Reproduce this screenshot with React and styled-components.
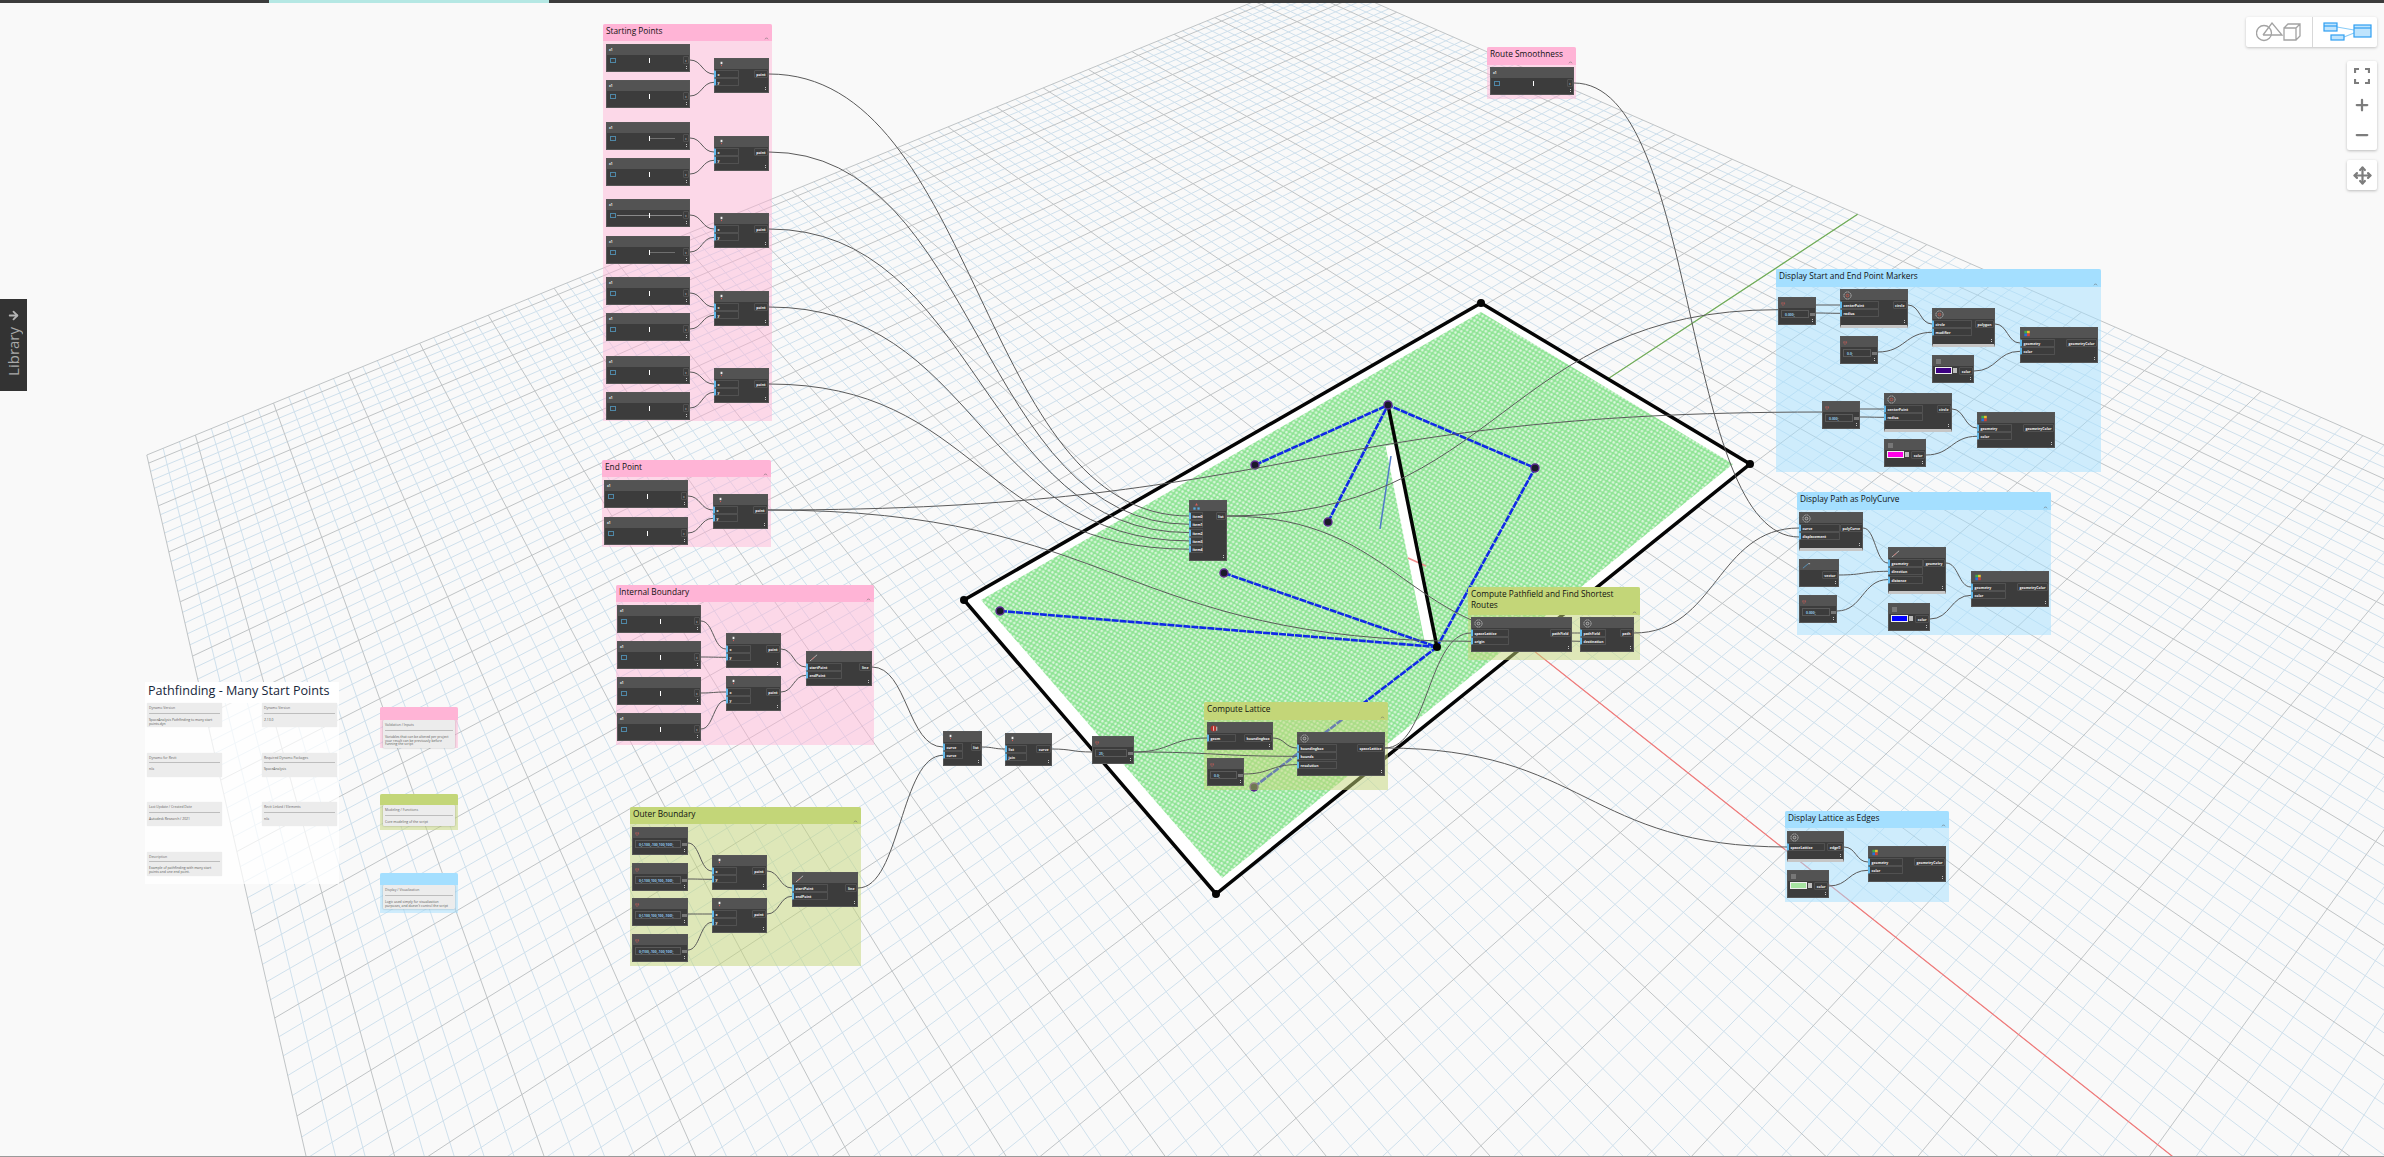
import React, { useMemo } from 'react'
import styled, { createGlobalStyle } from 'styled-components'
import { Plus, Minus, Move, ArrowRight } from 'lucide-react'

const GlobalStyle = createGlobalStyle`
  html, body { margin: 0; padding: 0; background: #f9f9f9; overflow: hidden; }
  body { font-family: "Open Sans", "Liberation Sans", sans-serif; }
`

/* ---------- perspective of the ground grid ---------- */
const V1 = [-103, -645]
const V2 = [3700, -1000]
const O = [1380, 529]
const A = 0.0086
const B = 0.0054
const UMAX = 56
const VMIN = -58
const VMAX = 48

const project = (u, v) => {
  const s = A * u
  const t = B * v
  const d = s + t + 1
  return [(s * V1[0] + t * V2[0] + O[0]) / d, (s * V1[1] + t * V2[1] + O[1]) / d]
}

const seg = (a, b) => `M${a[0].toFixed(1)} ${a[1].toFixed(1)}L${b[0].toFixed(1)} ${b[1].toFixed(1)}`

const gridPaths = () => {
  let minor = ''
  let major = ''
  for (let u = -UMAX; u <= UMAX; u++) {
    const d = seg(project(u, VMIN), project(u, VMAX))
    if (u % 5 === 0 || u === UMAX) major += d
    else minor += d
  }
  for (let v = VMIN; v <= VMAX; v++) {
    const d = seg(project(-UMAX, v), project(UMAX, v))
    if (v % 5 === 0 || v === VMIN || v === VMAX) major += d
    else minor += d
  }
  return { minor, major }
}

const outer = [[1481, 303], [1750, 464], [1216, 894], [964, 600]]
const inner = [[1481, 312], [1733, 464], [1222, 878], [981, 600]]
const pts = (l) => l.map((p) => p.join(',')).join(' ')

const hub = [1437, 647]
const paths = [
  [[1000, 611], hub],
  [[1224, 573], hub],
  [[1254, 787], hub],
  [[1255, 465], [1388, 405], [1535, 468], hub],
  [[1328, 522], [1388, 405]],
]
const markers = [[1000, 611], [1224, 573], [1254, 787], [1328, 522], [1255, 465], [1535, 468], [1388, 405]]

const Ground = () => {
  const { minor, major } = useMemo(gridPaths, [])
  const origin = project(0, 0)
  return (
    <Scene viewBox="0 0 2384 1157">
      <defs>
        <pattern id="lattice" width="6" height="5.2" patternUnits="userSpaceOnUse" patternTransform="rotate(-12)">
          <rect width="6" height="5.2" fill="#90e496" />
          <circle cx="1.5" cy="1.3" r="1.25" fill="#fff" opacity=".7" />
          <circle cx="4.5" cy="3.9" r="1.25" fill="#fff" opacity=".7" />
        </pattern>
      </defs>
      <path d={minor} stroke="#cfe0ec" strokeWidth="1" fill="none" />
      <path d={major} stroke="#c0c4c6" strokeWidth="1" fill="none" />
      <path d={seg(origin, project(-UMAX, 0))} stroke="#f47878" strokeWidth="1.2" />
      <path d={seg(origin, project(0, VMAX))} stroke="#6fae55" strokeWidth="1.2" />
      <polygon points={pts(outer)} fill="#fff" />
      <polygon points={pts(inner)} fill="url(#lattice)" />
      <path d="M1391 445L1430 640" stroke="#fff" strokeWidth="11" />
      <path d="M1408 558L1426 566" stroke="#f08a8a" strokeWidth="1.5" />
      <polygon points={pts(outer)} fill="none" stroke="#050505" strokeWidth="3.5" />
      <path d="M1388 405L1437 647" stroke="#050505" strokeWidth="3.5" />
      <path d="M1380 529L1391 456" stroke="#4f78c8" strokeWidth="1.5" />
      {paths.map((p, i) => (
        <polyline key={i} points={pts(p)} fill="none" stroke="#1029e6" strokeWidth="2.6" strokeDasharray="7 1" />
      ))}
      {outer.map((p, i) => <circle key={i} cx={p[0]} cy={p[1]} r="4" fill="#050505" />)}
      <circle cx={hub[0]} cy={hub[1]} r="4" fill="#050505" />
      {markers.map((p, i) => (
        <circle key={i} cx={p[0]} cy={p[1]} r="4" fill="#1a1a2a" stroke="#5c2a90" strokeWidth="1.4" />
      ))}
    </Scene>
  )
}

/* ---------- groups ---------- */
const tones = {
  pink: ['#ffb4d6', 'rgba(255,180,214,.48)'],
  green: ['#c3d678', 'rgba(195,214,120,.5)'],
  blue: ['#a4dfff', 'rgba(164,223,255,.5)'],
}

const groups = [
  { t: 'Starting Points', x: 603, y: 24, w: 169, h: 397, hh: 17, c: 'pink' },
  { t: 'Route Smoothness', x: 1487, y: 47, w: 89, h: 52, hh: 18, c: 'pink' },
  { t: 'End Point', x: 602, y: 460, w: 169, h: 87, hh: 17, c: 'pink' },
  { t: 'Internal Boundary', x: 616, y: 585, w: 258, h: 160, hh: 17, c: 'pink' },
  { t: 'Outer Boundary', x: 630, y: 807, w: 231, h: 159, hh: 17, c: 'green' },
  { t: 'Compute Lattice', x: 1204, y: 702, w: 184, h: 88, hh: 18, c: 'green' },
  { t: 'Compute Pathfield and Find Shortest Routes', x: 1468, y: 587, w: 172, h: 73, hh: 28, c: 'green' },
  { t: 'Display Start and End Point Markers', x: 1776, y: 269, w: 325, h: 203, hh: 18, c: 'blue' },
  { t: 'Display Path as PolyCurve', x: 1797, y: 492, w: 254, h: 143, hh: 18, c: 'blue' },
  { t: 'Display Lattice as Edges', x: 1785, y: 811, w: 164, h: 91, hh: 17, c: 'blue' },
]

/* ---------- nodes ---------- */
const slider = (id, x, y, w, track) => ({ id, kind: 'slider', x, y, w, h: 28, track })
const point = (id, x, y) => ({ id, kind: 'func', x, y, w: 55, h: 35, ins: ['x', 'y'], iw: 25, out: 'point', icon: 'dot' })
const polycurve = (id, x, y) => ({ id, kind: 'func', x, y, w: 66, h: 35, ins: ['startPoint', 'endPoint'], iw: 36, out: 'line', icon: 'pen' })
const code = (id, x, y, w, text) => ({ id, kind: 'code', x, y, w, h: 28, text })
const color = (id, x, y, fill) => ({ id, kind: 'color', x, y, w: 42, h: 28, fill })
const display = (id, x, y) => ({ id, kind: 'func', x, y, w: 78, h: 36, ins: ['geometry', 'color'], iw: 35, out: 'geometryColor', icon: 'cube' })

const nodes = [
  slider('s1', 606, 44, 84),
  slider('s2', 606, 80, 84),
  slider('s3', 606, 122, 84, 'right'),
  slider('s4', 606, 158, 84),
  slider('s5', 606, 199, 84, 'both'),
  slider('s6', 606, 236, 84, 'right'),
  slider('s7', 606, 277, 84),
  slider('s8', 606, 313, 84),
  slider('s9', 606, 356, 84),
  slider('s10', 606, 392, 84),
  point('p1', 714, 58),
  point('p2', 714, 136),
  point('p3', 714, 213),
  point('p4', 714, 291),
  point('p5', 714, 368),
  slider('rs', 1490, 67, 84),
  slider('e1', 604, 480, 84),
  slider('e2', 604, 517, 84),
  point('ep', 713, 494),
  slider('i1', 617, 605, 84),
  slider('i2', 617, 641, 84),
  slider('i3', 617, 677, 84),
  slider('i4', 617, 713, 84),
  point('ip1', 726, 633),
  point('ip2', 726, 676),
  polycurve('ipc', 806, 651),
  code('o1', 632, 827, 56, '0;[-100,-100,100,100];'),
  code('o2', 632, 863, 56, '0;[-100,100,100,-100];'),
  code('o3', 632, 898, 56, '0;[-100,100,100,-100];'),
  code('o4', 632, 934, 56, '0;[100,-100,-100,100];'),
  point('op1', 712, 855),
  point('op2', 712, 898),
  polycurve('opc', 792, 872),
  { id: 'm1', kind: 'func', x: 943, y: 731, w: 39, h: 35, ins: ['curve', 'curve'], iw: 20, out: 'list', icon: 'dot' },
  { id: 'm2', kind: 'func', x: 1005, y: 733, w: 47, h: 33, ins: ['list', 'join'], iw: 22, out: 'curve', icon: 'dot' },
  code('m3', 1092, 736, 42, '25;'),
  {
    id: 'list', kind: 'func', x: 1189, y: 500, w: 38, h: 61, iw: 14, out: 'list', icon: 'tri',
    ins: ['item0', 'item1', 'item2', 'item3', 'item4'],
  },
  { id: 'bb', kind: 'func', x: 1207, y: 722, w: 66, h: 28, ins: ['geom'], iw: 29, out: 'boundingbox', icon: 'red' },
  code('lc', 1207, 758, 37, '0.0;'),
  {
    id: 'lat', kind: 'func', x: 1297, y: 732, w: 88, h: 44, iw: 40, out: 'spaceLattice', icon: 'ring',
    ins: ['boundingbox', 'bounds', 'resolution'],
  },
  { id: 'pf', kind: 'func', x: 1471, y: 617, w: 101, h: 35, ins: ['spaceLattice', 'origin'], iw: 38, out: 'pathField', icon: 'ring' },
  { id: 'pt', kind: 'func', x: 1580, y: 617, w: 54, h: 35, ins: ['pathField', 'destination'], iw: 26, out: 'path', icon: 'ring' },
  code('c1', 1778, 297, 38, '0.000;'),
  { id: 'ci1', kind: 'func', x: 1840, y: 289, w: 68, h: 39, strip: 1, ins: ['centerPoint', 'radius'], iw: 39, out: 'circle', icon: 'ringRed' },
  code('c2', 1840, 336, 38, '0.0;'),
  { id: 'pa', kind: 'func', x: 1932, y: 308, w: 63, h: 39, strip: 1, ins: ['circle', 'modifier'], iw: 40, out: 'polygon', icon: 'ringRed' },
  color('k1', 1932, 355, '#3d0082'),
  display('d1', 2020, 327),
  code('c3', 1822, 401, 38, '0.000;'),
  { id: 'ci2', kind: 'func', x: 1884, y: 393, w: 68, h: 39, strip: 1, ins: ['centerPoint', 'radius'], iw: 39, out: 'circle', icon: 'ringRed' },
  color('k2', 1884, 439, '#ff00e6'),
  display('d2', 1977, 412),
  { id: 'cv', kind: 'func', x: 1799, y: 512, w: 64, h: 39, strip: 1, ins: ['curve', 'displacement'], iw: 41, out: 'polyCurve', icon: 'ring' },
  { id: 'vc', kind: 'func', x: 1799, y: 559, w: 40, h: 28, ins: [], iw: 0, out: 'vector', icon: 'axis' },
  code('c4', 1799, 595, 38, '0.000;'),
  { id: 'tr', kind: 'func', x: 1888, y: 547, w: 58, h: 47, strip: 1, ins: ['geometry', 'direction', 'distance'], iw: 35, out: 'geometry', icon: 'pen' },
  color('k3', 1888, 603, '#0000ff'),
  display('d3', 1971, 571),
  { id: 'ed', kind: 'func', x: 1787, y: 831, w: 57, h: 31, strip: 1, ins: ['spaceLattice'], iw: 38, out: 'edge[]', icon: 'ring' },
  color('k4', 1787, 870, '#a6e3a1'),
  display('d4', 1868, 846),
]

const byId = Object.fromEntries(nodes.map((n) => [n.id, n]))
const outAt = (id) => [byId[id].x + byId[id].w, byId[id].y + 16]
const inAt = (id, i) => [byId[id].x, byId[id].y + 16 + i * 8.3]
const curve = (a, b) => {
  const dx = Math.abs(b[0] - a[0]) / 2
  return `M${a[0]} ${a[1]}C${a[0] + dx} ${a[1]} ${b[0] - dx} ${b[1]} ${b[0]} ${b[1]}`
}

const links = [
  ['s1', 'p1', 0], ['s2', 'p1', 1], ['s3', 'p2', 0], ['s4', 'p2', 1], ['s5', 'p3', 0],
  ['s6', 'p3', 1], ['s7', 'p4', 0], ['s8', 'p4', 1], ['s9', 'p5', 0], ['s10', 'p5', 1],
  ['p1', 'list', 0], ['p2', 'list', 1], ['p3', 'list', 2], ['p4', 'list', 3], ['p5', 'list', 4],
  ['e1', 'ep', 0], ['e2', 'ep', 1], ['ep', 'pf', 1], ['ep', 'c3', -0.6],
  ['i1', 'ip1', 0], ['i2', 'ip1', 1], ['i3', 'ip2', 0], ['i4', 'ip2', 1], ['ip1', 'ipc', 0], ['ip2', 'ipc', 1],
  ['o1', 'op1', 0], ['o2', 'op1', 1], ['o3', 'op2', 0], ['o4', 'op2', 1], ['op1', 'opc', 0], ['op2', 'opc', 1],
  ['ipc', 'm1', 0], ['opc', 'm1', 1], ['m1', 'm2', 0], ['m2', 'm3', 0],
  ['m3', 'bb', 0], ['m3', 'lat', 1], ['bb', 'lat', 0], ['lc', 'lat', 2],
  ['lat', 'pf', 0], ['lat', 'ed', 0], ['pf', 'pt', 0], ['list', 'pt', 1], ['list', 'c1', -0.4],
  ['pt', 'cv', 0], ['c1', 'ci1', 1], ['c3', 'ci2', 1], ['ci1', 'pa', 0], ['c2', 'pa', 1], ['pa', 'd1', 0], ['k1', 'd1', 1],
  ['ci2', 'd2', 0], ['k2', 'd2', 1], ['cv', 'tr', 0], ['vc', 'tr', 1], ['c4', 'tr', 2], ['tr', 'd3', 0], ['k3', 'd3', 1],
  ['ed', 'd4', 0], ['k4', 'd4', 1],
]

const Wires = () => (
  <WireLayer viewBox="0 0 2384 1157">
    {links.map(([from, to, i], n) => (
      <path key={n} d={curve(outAt(from), inAt(to, i))} />
    ))}
    <path d="M1574 83C1700 83 1680 537 1799 537" />
    <path d="M1816 305L1840 305" />
    <path d="M1860 409L1884 409" />
  </WireLayer>
)

/* ---------- small header glyphs ---------- */
const HeaderIcon = ({ type }) => {
  if (type === 'ring' || type === 'ringRed') {
    return (
      <Glyph viewBox="0 0 10 10">
        <circle cx="5" cy="5" r="4" fill="none" stroke="#ddd" strokeWidth=".7" strokeDasharray="1.5 .6" />
        <circle cx="5" cy="5" r="1.5" fill="none" stroke={type === 'ring' ? '#ddd' : '#e05a4a'} strokeWidth=".7" />
      </Glyph>
    )
  }
  if (type === 'cube') {
    return (
      <Glyph viewBox="0 0 10 10">
        <rect x="1.5" y="2" width="3" height="3" fill="#3fae49" />
        <rect x="4.5" y="2" width="3" height="3" fill="#e8c12e" />
        <rect x="1.5" y="5" width="3" height="3" fill="#2b6fd6" />
        <rect x="4.5" y="5" width="3" height="3" fill="#d0433a" />
      </Glyph>
    )
  }
  if (type === 'pen') {
    return (
      <Glyph viewBox="0 0 10 10">
        <path d="M1 9L9 2" stroke="#d9d9d9" strokeWidth=".8" />
        <path d="M3 7L6 5" stroke="#d9605a" strokeWidth=".8" />
      </Glyph>
    )
  }
  if (type === 'tri') {
    return (
      <Glyph viewBox="0 0 10 10">
        <path d="M5 1L6.5 4H3.5Z" fill="#d9605a" />
        <rect x="1.5" y="6" width="2.5" height="2.5" fill="#58a9dd" />
        <rect x="6" y="6" width="2.5" height="2.5" fill="#58a9dd" />
      </Glyph>
    )
  }
  if (type === 'red') {
    return (
      <Glyph viewBox="0 0 10 10">
        <circle cx="4" cy="5" r="3.4" fill="#b3302c" />
        <path d="M4 2.5V7.5M7.5 3V7.5" stroke="#eee" strokeWidth=".9" />
      </Glyph>
    )
  }
  if (type === 'axis') {
    return (
      <Glyph viewBox="0 0 10 10">
        <path d="M1 8L7 3" stroke="#58a9dd" strokeWidth=".8" />
        <path d="M7 3H9" stroke="#d9d9d9" strokeWidth=".8" />
      </Glyph>
    )
  }
  return (
    <Glyph viewBox="0 0 10 10">
      <rect x="4" y="2" width="2" height="2.6" fill="#eee" />
      <rect x="4.4" y="5.6" width="1.2" height="1.2" fill="#d9605a" />
    </Glyph>
  )
}

const GraphNode = ({ n }) => (
  <NodeBox $x={n.x} $y={n.y} $w={n.w} $h={n.h} $strip={n.strip}>
    <NodeHead>
      {n.kind === 'slider' && <SliderName>x1</SliderName>}
      {n.kind === 'code' && <CodeMark>{'{;}'}</CodeMark>}
      {n.kind === 'color' && <ColorMark />}
      {n.kind === 'func' && <HeaderIcon type={n.icon} />}
    </NodeHead>
    {n.kind === 'slider' && (
      <NodeBody>
        <ExpandBox />
        <Track $type={n.track}><Thumb /></Track>
        <OutChip>›</OutChip>
      </NodeBody>
    )}
    {n.kind === 'code' && (
      <NodeBody>
        <CodeInput>{n.text}</CodeInput>
        <CodeOut />
      </NodeBody>
    )}
    {n.kind === 'color' && (
      <NodeBody>
        <Swatch $fill={n.fill} />
        <SwatchDrop />
        <OutChip>color</OutChip>
      </NodeBody>
    )}
    {n.kind === 'func' && (
      <PortBody>
        <PortColumn>
          {n.ins.map((label, i) => (
            <InPort key={i} $w={n.iw}>{label}</InPort>
          ))}
        </PortColumn>
        <OutChip>{n.out}</OutChip>
      </PortBody>
    )}
    <Grip />
  </NodeBox>
)

const panelNotes = [
  ['Dynamo Version', 'SpaceAnalysis Pathfinding to many start points.dyn'],
  ['Dynamo Version', '2.13.0'],
  ['Dynamo for Revit', 'n/a'],
  ['Required Dynamo Packages', 'SpaceAnalysis'],
  ['Last Update / Created Date', 'Autodesk Research / 2021'],
  ['Revit Linked / Elements', 'n/a'],
  ['Description', 'Example of pathfinding with many start points and one end point.'],
]

const legend = [
  {
    t: 'Validation / Inputs', c: 'pink', x: 380, y: 707, w: 78, h: 41, hh: 13,
    body: 'Variables that can be altered per project your result can be previously before running the script',
  },
  { t: 'Modeling / Functions', c: 'green', x: 380, y: 794, w: 78, h: 36, hh: 11, body: 'Core modeling of the script' },
  {
    t: 'Display / Visualization', c: 'blue', x: 380, y: 873, w: 78, h: 40, hh: 12,
    body: "Logic used simply for visualization purposes, and doesn't control the script",
  },
]

const App = () => (
  <Viewport>
    <GlobalStyle />
    <Ground />
    {groups.map((g) => (
      <Group key={g.t} $x={g.x} $y={g.y} $w={g.w} $h={g.h} $tone={g.c}>
        <GroupHead $h={g.hh} $tone={g.c}>
          {g.t}
          <Caret viewBox="0 0 6 4"><path d="M1 3L3 1L5 3" /></Caret>
        </GroupHead>
      </Group>
    ))}
    <InfoPanel>
      <InfoTitle>Pathfinding - Many Start Points</InfoTitle>
      <InfoGrid>
        {panelNotes.map(([a, b], i) => (
          <Note key={i}>
            <NoteTitle>{a}</NoteTitle>
            <NoteBody>{b}</NoteBody>
          </Note>
        ))}
      </InfoGrid>
    </InfoPanel>
    {legend.map((g) => (
      <Group key={g.t} $x={g.x} $y={g.y} $w={g.w} $h={g.h} $tone={g.c}>
        <GroupHead $h={g.hh} $tone={g.c} />
        <LegendInner>
          <Note>
            <NoteTitle>{g.t}</NoteTitle>
            <NoteBody>{g.body}</NoteBody>
          </Note>
        </LegendInner>
      </Group>
    ))}
    <Wires />
    {nodes.map((n) => <GraphNode key={n.id} n={n} />)}

    <TopBar><TopTab /></TopBar>
    <BottomLine />

    <LibraryTab>
      <ArrowRight size={13} strokeWidth={3.4} color="#b4b4b4" />
      <LibraryLabel>Library</LibraryLabel>
    </LibraryTab>

    <ViewSwitch>
      <ViewPart>
        <svg width="46" height="20" viewBox="0 0 46 20" fill="none" stroke="#a3a3a3" strokeWidth="1.3">
          <circle cx="8" cy="11" r="7.5" />
          <path d="M7 13L16 1L26 13H7" />
          <path d="M28 6H40V18H28ZM28 6L32 2H44V14L40 18M40 6L44 2" />
        </svg>
      </ViewPart>
      <ViewPart>
        <svg width="49" height="20" viewBox="0 0 49 20" fill="#bfe4fd" stroke="#2f9ff2" strokeWidth="1.2">
          <path d="M14 5L31 8M21 15L31 11" stroke="#8accf7" fill="none" />
          <rect x="1" y="1" width="13" height="8" />
          <path d="M1 4H14" fill="none" />
          <rect x="8" y="13" width="13" height="5" />
          <rect x="31" y="3" width="17" height="12" />
          <path d="M31 6H48" fill="none" />
        </svg>
      </ViewPart>
    </ViewSwitch>
    <ZoomCard>
      <ZoomButton>
        <svg width="16" height="16" viewBox="0 0 16 16" fill="none" stroke="#7d7d7d" strokeWidth="2.2">
          <path d="M1 5V1H5M11 1H15V5M15 11V15H11M5 15H1V11" />
        </svg>
      </ZoomButton>
      <ZoomButton><Plus size={18} strokeWidth={3} color="#7d7d7d" /></ZoomButton>
      <ZoomButton><Minus size={18} strokeWidth={3} color="#7d7d7d" /></ZoomButton>
    </ZoomCard>
    <PanCard><Move size={19} strokeWidth={2.8} color="#7d7d7d" /></PanCard>
  </Viewport>
)

const Viewport = styled.div`
  position: relative;
  width: 2384px;
  height: 1157px;
  overflow: hidden;
  background: #f9f9f9;
`

const Scene = styled.svg`
  position: absolute;
  inset: 0;
  width: 2384px;
  height: 1157px;
`

const WireLayer = styled.svg`
  position: absolute;
  inset: 0;
  width: 2384px;
  height: 1157px;
  pointer-events: none;
  path {
    fill: none;
    stroke: #5a5a5a;
    stroke-width: 1;
  }
`

const Group = styled.div.attrs((p) => ({
  style: { left: p.$x, top: p.$y, width: p.$w, height: p.$h },
}))`
  position: absolute;
  display: flex;
  flex-direction: column;
  background: ${(p) => tones[p.$tone][1]};
  border-radius: 2px 2px 0 0;
`

const GroupHead = styled.div`
  position: relative;
  flex: 0 0 auto;
  height: ${(p) => p.$h}px;
  box-sizing: border-box;
  padding: 1px 3px 0;
  background: ${(p) => tones[p.$tone][0]};
  border-radius: 2px 2px 0 0;
  color: #111;
  font-size: 8.3px;
  line-height: 11px;
`

const Caret = styled.svg`
  position: absolute;
  right: 3px;
  bottom: 1px;
  width: 5px;
  height: 3px;
  fill: none;
  stroke: #666;
  stroke-width: 0.8;
`

const NodeBox = styled.div.attrs((p) => ({
  style: { left: p.$x, top: p.$y, width: p.$w, height: p.$h },
}))`
  position: absolute;
  box-sizing: border-box;
  display: flex;
  flex-direction: column;
  background: #3c3c3c;
  border: 1px solid #565656;
  ${(p) => p.$strip && 'border-bottom: 3px solid #c6c6c6;'}
  color: #f2f2f2;
  font-size: 3.5px;
  font-weight: 700;
  line-height: 7px;
  white-space: nowrap;
`

const NodeHead = styled.div`
  flex: 0 0 10px;
  display: flex;
  align-items: center;
  padding-left: 2px;
  background: #535353;
`

const Glyph = styled.svg`
  width: 9px;
  height: 9px;
`

const SliderName = styled.span`
  font-size: 3.2px;
  color: #eee;
`

const CodeMark = styled.span`
  font-size: 3.4px;
  color: #d9605a;
`

const ColorMark = styled.span`
  width: 5px;
  height: 5px;
  margin-left: 1px;
  background: #777;
`

const NodeBody = styled.div`
  position: relative;
  display: flex;
  align-items: center;
  gap: 1px;
  height: 10px;
  padding: 0 0 0 2px;
`

const PortBody = styled.div`
  display: flex;
  justify-content: space-between;
  align-items: flex-start;
  padding-top: 1px;
`

const PortColumn = styled.div`
  display: flex;
  flex-direction: column;
  gap: 0.3px;
  margin-left: -1px;
`

const InPort = styled.div`
  box-sizing: border-box;
  width: ${(p) => p.$w}px;
  height: 8px;
  padding-left: 1.5px;
  border: 0.5px solid #515151;
  border-left: 2px solid #62b8e8;
  border-radius: 1px;
`

const OutChip = styled.div`
  box-sizing: border-box;
  height: 8px;
  margin-left: auto;
  padding: 0 1.5px;
  border: 0.5px solid #515151;
  border-radius: 1px;
`

const ExpandBox = styled.span`
  box-sizing: border-box;
  flex: 0 0 6px;
  height: 5px;
  margin-left: 1px;
  border: 1px solid #4f87a6;
`

const Track = styled.div`
  position: relative;
  flex: 1;
  height: 1px;
  background: linear-gradient(
    to right,
    ${(p) => (p.$type === 'both' ? '#8a8a8a 0 100%' : 'transparent 0 50%')},
    ${(p) => (p.$type === 'right' ? '#6f6f6f 50% 90%' : 'transparent 50% 100%')},
    transparent 90%
  );
`

const Thumb = styled.span`
  position: absolute;
  left: 50%;
  top: -2px;
  width: 1px;
  height: 5px;
  background: #fff;
`

const CodeInput = styled.div`
  box-sizing: border-box;
  flex: 1;
  min-width: 0;
  height: 8px;
  margin-top: 2px;
  padding-left: 3px;
  border: 0.7px solid #5a5a5a;
  color: #8fc7ee;
  font-size: 3.4px;
`

const CodeOut = styled.span`
  flex: 0 0 5px;
  height: 3px;
  margin-top: 2px;
  background: #777;
`

const Swatch = styled.span`
  flex: 0 0 15px;
  height: 5px;
  margin-top: -1px;
  border: 0.7px solid #eee;
  background: ${(p) => p.$fill};
`

const SwatchDrop = styled.span`
  flex: 0 0 4px;
  height: 5px;
  margin-top: -1px;
  background: #bdbdbd;
`

const Grip = styled.span`
  position: absolute;
  right: 2px;
  bottom: 1px;
  width: 1px;
  height: 4px;
  background: repeating-linear-gradient(#c2c2c2 0 1px, transparent 1px 2px);
`

const InfoPanel = styled.div`
  position: absolute;
  left: 145px;
  top: 682px;
  width: 194px;
  height: 202px;
  background: rgba(255, 255, 255, 0.72);
`

const InfoTitle = styled.div`
  height: 21px;
  padding-left: 3px;
  background: #fff;
  color: #16263a;
  font-size: 12.6px;
  line-height: 17px;
`

const InfoGrid = styled.div`
  display: grid;
  grid-template-columns: 75px 75px;
  grid-auto-rows: 49.5px;
  column-gap: 40px;
  align-items: start;
  padding-left: 2px;
`

const Note = styled.div`
  box-sizing: border-box;
  min-height: 24px;
  padding: 3px 2px 2px;
  background: #ececec;
  border-radius: 1px;
  box-shadow: 0 0 1px rgba(0, 0, 0, 0.12);
  color: #666;
  font-size: 3.4px;
  line-height: 3.8px;
`

const NoteTitle = styled.div`
  padding-bottom: 3px;
  margin-bottom: 4px;
  border-bottom: 1px solid #bdbdbd;
`

const NoteBody = styled.div`
  color: #5a5a5a;
`

const LegendInner = styled.div`
  padding: 0 3px;
  & > div {
    min-height: 0;
    box-shadow: 0 0 2px rgba(0, 0, 0, 0.3);
  }
`

const TopBar = styled.div`
  position: absolute;
  left: 0;
  top: 0;
  width: 100%;
  height: 3px;
  background: #3c3c3c;
  padding-left: 269px;
  box-sizing: border-box;
`

const TopTab = styled.div`
  width: 280px;
  height: 3px;
  background: #b5e8e4;
`

const BottomLine = styled.div`
  position: absolute;
  left: 0;
  bottom: 0;
  width: 100%;
  height: 1px;
  background: #9a9a9a;
`

const LibraryTab = styled.div`
  position: absolute;
  left: 0;
  top: 299px;
  width: 27px;
  height: 92px;
  display: flex;
  flex-direction: column;
  align-items: center;
  gap: 5px;
  padding-top: 10px;
  box-sizing: border-box;
  background: #333;
`

const LibraryLabel = styled.span`
  writing-mode: vertical-rl;
  transform: rotate(180deg);
  color: #a9a9a9;
  font-size: 15px;
  line-height: 15px;
`

const ViewSwitch = styled.div`
  position: absolute;
  left: 2246px;
  top: 17px;
  width: 131px;
  height: 30px;
  display: grid;
  grid-template-columns: 66px 65px;
  background: #fff;
  border-radius: 2px;
  box-shadow: 0 1px 3px rgba(0, 0, 0, 0.22);
`

const ViewPart = styled.div`
  display: flex;
  align-items: center;
  padding-left: 10px;
  & + & {
    border-left: 1px solid #d8d8d8;
  }
`

const ZoomCard = styled.div`
  position: absolute;
  left: 2347px;
  top: 61px;
  width: 30px;
  height: 89px;
  display: grid;
  grid-template-rows: repeat(3, 1fr);
  background: #fff;
  border-radius: 2px;
  box-shadow: 0 1px 3px rgba(0, 0, 0, 0.25);
`

const ZoomButton = styled.div`
  display: flex;
  align-items: center;
  justify-content: center;
`

const PanCard = styled.div`
  position: absolute;
  left: 2347px;
  top: 160px;
  width: 30px;
  height: 30px;
  display: flex;
  align-items: center;
  justify-content: center;
  background: #fff;
  border-radius: 2px;
  box-shadow: 0 1px 3px rgba(0, 0, 0, 0.25);
`

export default App
